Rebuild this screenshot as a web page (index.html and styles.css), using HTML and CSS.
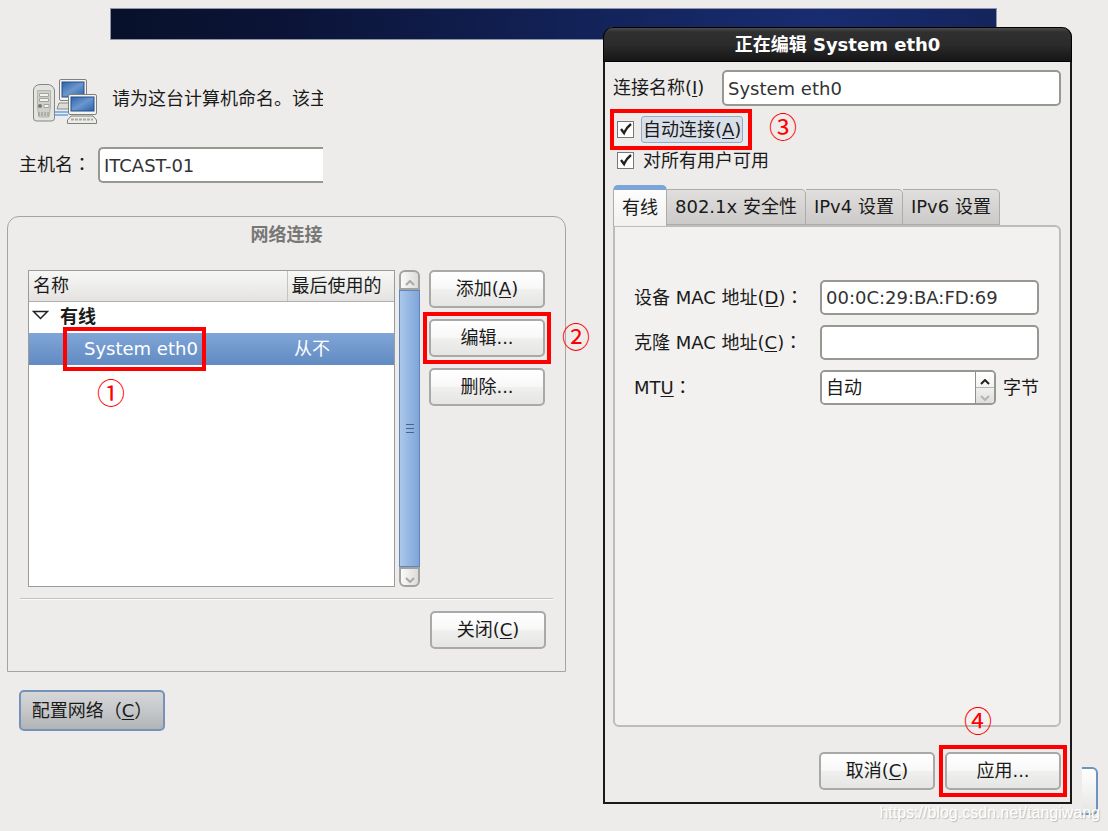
FILE: index.html
```html
<!DOCTYPE html>
<html lang="zh-CN">
<head>
    <meta charset="UTF-8">
    <meta name="viewport" content="width=device-width, initial-scale=1.0">
    <title>网络连接</title>
    <link rel="stylesheet" href="styles.css">
</head>
<body>

<div class="banner"></div>

<main class="installer">
    <div class="intro">
        <svg class="intro-icon" width="66" height="48" viewBox="0 0 66 48" aria-hidden="true">
            <defs>
                <linearGradient id="screen" x1="0" y1="0" x2="1" y2="1">
                    <stop offset="0" stop-color="#2f62a8"/>
                    <stop offset="0.5" stop-color="#6b97cd"/>
                    <stop offset="1" stop-color="#2c60a8"/>
                </linearGradient>
            </defs>
            <!-- back computer -->
            <path d="M27 25 L55 25 L57 31 L25 31 Z" fill="#dcdcd6" stroke="#8a8a86"/>
            <rect x="27.500" y="1.500" width="27" height="21" rx="1.500" fill="#f4f4f0" stroke="#80807c"/>
            <rect x="30" y="4" width="22" height="15" fill="url(#screen)" stroke="#244f8e"/>
            <!-- cable -->
            <path d="M22 34 H36 M22 37 H36" stroke="#86b4e6" stroke-width="2"/>
            <!-- server -->
            <path d="M1.500 12 Q2 7 8 6.500 H16 Q21 7 22.500 12 V40 Q22.500 43 19.500 43 H4.500 Q1.500 43 1.500 40 Z" fill="#e4e4df" stroke="#858581"/>
            <path d="M5.500 12.500 H18.500 V29 L17 39 H7 L5.500 29 Z" fill="#d0d0cb" stroke="#b4b4af"/>
            <path d="M7.500 15.500 H16.500 V18.500 H7.500 Z M7.500 20.500 H16.500 V23.500 H7.500 Z M12 26.500 H17 V29.500 H12 Z" fill="#f3f3ef" stroke="#a3a39f"/>
            <circle cx="8" cy="28" r="2" fill="#777773"/>
            <path d="M7 34 V38 M10 34 V38 M13 34 V38 M16 34 V38" stroke="#8d8d89"/>
            <!-- front computer -->
            <path d="M39 38 L61 38 L64.500 42 V45.500 H35.500 V42 Z" fill="#ecece8" stroke="#80807c"/>
            <path d="M39 41.500 H61" stroke="#a9a9a4" stroke-width="2" stroke-dasharray="3 1"/>
            <rect x="46" y="36" width="9" height="3" fill="#b9b9b4"/>
            <rect x="36.500" y="16.500" width="28" height="20" rx="1.500" fill="#f4f4f0" stroke="#80807c"/>
            <rect x="39" y="19" width="23" height="14" fill="url(#screen)" stroke="#244f8e"/>
        </svg>
        <p class="intro-text">请为这台计算机命名。该主</p>
    </div>

    <div class="host-row">
        <label for="hostname">主机名<span lang="zh-TW" class="colon">：</span></label>
        <input type="text" class="entry host-entry" id="hostname" value="ITCAST-01">
    </div>

    <section class="connections">
        <h2>网络连接</h2>
        <div class="connections-body">
            <div class="tree">
                <table>
                    <thead>
                        <tr><th class="col-name">名称</th><th class="col-used">最后使用的</th></tr>
                    </thead>
                    <tbody>
                        <tr class="group">
                            <td colspan="2">
                                <svg width="17" height="10" viewBox="0 0 17 10" aria-hidden="true"><path d="M1.500 1.500 H15.500 L8.500 8.500 Z" fill="#fff" stroke="#222" stroke-width="1.500"/></svg>有线
                            </td>
                        </tr>
                        <tr class="selected">
                            <td><span class="connection marked">System eth0</span></td>
                            <td class="last-used">从不</td>
                        </tr>
                    </tbody>
                </table>
                <span class="step step-1">①</span>
            </div>
            <div class="scrollbar">
                <button type="button" class="scroll-up" aria-label="向上"><svg width="10" height="6" viewBox="0 0 10 6"><path d="M1 5 L5 1 L9 5" fill="none" stroke="#a8a8a6" stroke-width="2"/></svg></button>
                <div class="thumb"><i></i></div>
                <button type="button" class="scroll-down" aria-label="向下"><svg width="10" height="6" viewBox="0 0 10 6"><path d="M1 1 L5 5 L9 1" fill="none" stroke="#a8a8a6" stroke-width="2"/></svg></button>
            </div>
            <div class="actions">
                <button type="button" class="btn">添加(<u>A</u>)</button>
                <button type="button" class="btn marked">编辑...<span class="step step-2">②</span></button>
                <button type="button" class="btn">删除...</button>
            </div>
        </div>
        <div class="connections-footer">
            <button type="button" class="btn">关闭(<u>C</u>)</button>
        </div>
    </section>

    <button type="button" class="btn configure">配置网络（<u>C</u>）</button>
</main>

<button type="button" class="next" aria-label="下一步"></button>

<section class="dialog">
    <h1>正在编辑 System eth0</h1>
    <form class="dialog-body">
        <div class="name-row">
            <label for="conn-name">连接名称(<u>I</u>)</label>
            <input type="text" class="entry" id="conn-name" value="System eth0">
        </div>
        <div class="check-row marked">
            <input type="checkbox" id="auto" checked>
            <label for="auto" class="focused">自动连接(<u>A</u>)</label>
            <span class="step step-3">③</span>
        </div>
        <div class="check-row">
            <input type="checkbox" id="all-users" checked>
            <label for="all-users">对所有用户可用</label>
        </div>

        <div class="tabs">
            <button type="button" class="tab active">有线</button>
            <button type="button" class="tab">802.1x 安全性</button>
            <button type="button" class="tab">IPv4 设置</button>
            <button type="button" class="tab">IPv6 设置</button>
        </div>
        <div class="panel">
            <label for="mac">设备 MAC 地址(<u>D</u>)<span lang="zh-TW" class="colon">：</span></label>
            <input type="text" class="entry" id="mac" value="00:0C:29:BA:FD:69">
            <label for="clone">克隆 MAC 地址(<u>C</u>)<span lang="zh-TW" class="colon">：</span></label>
            <input type="text" class="entry" id="clone">
            <label for="mtu">MT<u>U</u><span lang="zh-TW" class="colon">：</span></label>
            <div class="mtu">
                <div class="spin">
                    <input type="text" id="mtu" value="自动">
                    <div class="spin-buttons">
                        <button type="button" aria-label="增加"><svg width="10" height="6" viewBox="0 0 10 6"><path d="M1 5 L5 1 L9 5" fill="none" stroke="#222" stroke-width="2"/></svg></button>
                        <button type="button" aria-label="减少"><svg width="10" height="6" viewBox="0 0 10 6"><path d="M1 1 L5 5 L9 1" fill="none" stroke="#b4b4b2" stroke-width="2"/></svg></button>
                    </div>
                </div>
                <span>字节</span>
            </div>
        </div>

        <div class="dialog-actions">
            <button type="button" class="btn">取消(<u>C</u>)</button>
            <button type="submit" class="btn marked">应用...<span class="step step-4">④</span></button>
        </div>
    </form>
</section>

<div class="watermark">https://blog.csdn.net/tangiwang</div>

</body>
</html>
```
FILE: styles.css
```css
* {
    box-sizing: border-box;
}

body {
    position: relative;
    min-height: 100vh;
    margin: 0;
    overflow: hidden;
    background: #edecea;
    color: #1a1a1a;
    font-family: "DejaVu Sans", "Noto Sans CJK SC", sans-serif;
    font-size: 18px;
    line-height: 26px;
}

button,
input {
    color: inherit;
    font: inherit;
}

u {
    text-decoration-thickness: 1px;
    text-underline-offset: 2px;
}

.colon {
    font-family: "Noto Sans CJK TC", sans-serif;
    line-height: 1;
}

/* shared controls */
.btn {
    position: relative;
    width: 116px;
    height: 38px;
    padding: 0;
    border: 2px solid #a9a9a7;
    border-radius: 5px;
    background: linear-gradient(#ffffff, #f8f8f8 48%, #efefee 52%, #e5e5e3);
    white-space: nowrap;
}

.entry {
    width: 100%;
    height: 36px;
    padding: 0 4px;
    border: 2px solid #979794;
    border-radius: 5px;
    background: #fff;
    color: #333;
}

.marked {
    position: relative;
}

.marked::after {
    content: "";
    position: absolute;
    inset: -9px -8px;
    border: 4px solid #f00;
    pointer-events: none;
}

.step {
    position: absolute;
    color: #f00;
    font-family: "Noto Sans CJK SC", sans-serif;
    font-size: 28px;
    line-height: 28px;
}

.step-1 {
    top: 107px;
    left: 68px;
}

.step-2 {
    top: 1px;
    left: 131px;
}

.step-3 {
    top: -4px;
    left: 152px;
}

.step-4 {
    top: -48px;
    left: 17px;
}

/* installer page */
.banner {
    height: 32px;
    margin: 8px 111px 0 110px;
    border: 1px solid #8f95a8;
    background: linear-gradient(90deg, #08112a, #0b1437 20%, #13235a 55%, #182c70 80%, #14245c);
}

.installer {
    padding: 38px 542px 0 7px;
}

.intro {
    display: flex;
    align-items: center;
    gap: 14px;
    width: 316px;
    padding-left: 25px;
}

.intro-icon {
    flex: none;
}

.intro-text {
    margin: 0 0 6px;
    overflow: hidden;
    white-space: nowrap;
}

.host-row {
    display: flex;
    align-items: center;
    width: 316px;
    margin-top: 21px;
    padding-left: 12px;
}

.host-row label {
    flex: none;
    width: 79px;
}

.host-entry {
    border-right: 0;
    border-radius: 5px 0 0 5px;
}

.connections {
    margin-top: 33px;
    padding: 5px 12px 22px;
    border: 1px solid #a5a4a2;
    border-radius: 12px 12px 0 0;
}

.connections h2 {
    margin: 0;
    color: #777775;
    font-size: 18px;
    line-height: 26px;
    text-align: center;
}

.connections-body {
    display: flex;
    align-items: stretch;
    gap: 4px;
    padding: 22px 8px 11px;
    border-bottom: 1px solid #c4c3c1;
    box-shadow: 0 1px #fafafa;
}

.tree {
    position: relative;
    flex: 1;
    min-height: 317px;
    border: 1px solid #9c9b99;
    background: #fff;
}

.tree table {
    width: 100%;
    border-collapse: collapse;
}

.tree th {
    height: 30px;
    padding: 0 4px;
    border-bottom: 1px solid #b0afad;
    background: linear-gradient(#f7f7f6, #e4e3e1);
    font-weight: normal;
    text-align: left;
}

.tree td {
    height: 32px;
    padding: 0 3px;
}

.tree .col-used {
    width: 107px;
    border-left: 1px solid #c4c3c1;
}

.tree .group {
    font-weight: bold;
}

.tree .group svg {
    margin: 0 11px 3px 0;
}

.tree .selected {
    background: linear-gradient(#80a5d8, #618bc2);
    color: #fff;
}

.tree .last-used {
    padding-left: 7px;
}

.connection {
    display: inline-block;
    margin-left: 39px;
    padding-left: 13px;
}

.scrollbar {
    display: flex;
    flex-direction: column;
    width: 21px;
}

.scrollbar button {
    height: 20px;
    padding: 0;
    border: 2px solid #a2a2a0;
    background: linear-gradient(90deg, #fafafa, #dddcda);
    line-height: 10px;
}

.scroll-up {
    border-radius: 6px 6px 0 0;
}

.scroll-down {
    border-radius: 0 0 6px 6px;
}

.thumb {
    display: flex;
    flex: 1;
    align-items: center;
    justify-content: center;
    border: 1px solid #5f87bb;
    background: linear-gradient(90deg, #abc7eb, #7fa5d9);
}

.thumb i {
    width: 8px;
    height: 10px;
    background: repeating-linear-gradient(#45658f 0 1px, transparent 1px 4px);
}

.actions {
    display: flex;
    flex-direction: column;
    gap: 11px;
    padding-left: 5px;
}

.connections-footer {
    display: flex;
    justify-content: flex-end;
    padding: 12px 7px 0 0;
}

.configure {
    width: 146px;
    height: 41px;
    margin: 18px 0 0 12px;
    border-color: #7593b8;
    background: linear-gradient(#d6d6d7, #c5c8ca 50%, #b2b3b5);
}

.next {
    position: absolute;
    top: 767px;
    right: 10px;
    width: 16px;
    height: 48px;
    border: 2px solid #6f92bf;
    border-left: 0;
    border-radius: 0 6px 6px 0;
    background: linear-gradient(#fff, #e5e5e3);
}

/* connection editor */
.dialog {
    position: absolute;
    top: 27px;
    right: 36px;
    left: 603px;
    border: 2px solid #1a1a1a;
    border-top: 0;
    border-radius: 10px 10px 0 0;
    background: #edecea;
}

.dialog h1 {
    height: 35px;
    margin: 0 -2px;
    border: 1px solid #000;
    border-radius: 10px 10px 0 0;
    background: linear-gradient(#4c4c4c, #303030 12%, #2b2b2b 50%, #161616);
    color: #fff;
    font-size: 18px;
    line-height: 34px;
    text-align: center;
}

.dialog-body {
    padding: 8px 9px 12px 8px;
}

.name-row {
    display: flex;
    align-items: center;
    margin-bottom: 10px;
}

.name-row label {
    flex: none;
    width: 109px;
}

.check-row {
    display: flex;
    align-items: center;
    gap: 7px;
    width: 128px;
    height: 27px;
    margin: 0 0 4px 4px;
}

.check-row.marked::after {
    inset: -7px;
}

.check-row label {
    flex: none;
    padding: 0 2px;
}

.check-row .focused {
    padding: 0 1px;
    border: 1px solid #93a9c6;
    border-radius: 3px;
    background: #d8dfe8;
    line-height: 25px;
}

.check-row input {
    flex: none;
    width: 17px;
    height: 17px;
    margin: 0;
    appearance: none;
    border: 1px solid #777775;
    background: #fff;
}

.check-row input:checked {
    background: #fff url("data:image/svg+xml,%3Csvg xmlns='http://www.w3.org/2000/svg' viewBox='0 0 15 15'%3E%3Cpath d='M3 7 L6 11 Q8 6 13 2' fill='none' stroke='%23222' stroke-width='2.4'/%3E%3C/svg%3E");
}

.tabs {
    display: flex;
    align-items: flex-end;
    height: 41px;
    margin-top: 11px;
}

.tab {
    height: 36px;
    margin-bottom: 1px;
    padding: 0 8px;
    border: 1px solid #adacaa;
    border-left: 0;
    border-radius: 0 5px 0 0;
    background: linear-gradient(#e0dfdd, #cbcac8);
    white-space: nowrap;
}

.tab.active {
    position: relative;
    height: 41px;
    margin-bottom: 0;
    padding: 0 8px;
    border-left: 1px solid #adacaa;
    border-top: 5px solid #7da3d8;
    border-bottom: 0;
    border-radius: 5px 5px 0 0;
    background: linear-gradient(#fdfdfd, #f2f1ef);
}

.panel {
    display: grid;
    grid-template-columns: 186px 1fr;
    gap: 10px 0;
    align-content: start;
    align-items: center;
    min-height: 502px;
    margin-top: -1px;
    padding: 53px 20px 20px 19px;
    border: 2px solid #bdbcba;
    border-radius: 0 6px 6px 6px;
    background: #f2f1ef;
}

.panel .entry {
    height: 35px;
}

.mtu {
    display: flex;
    align-items: center;
    justify-content: space-between;
}

.spin {
    display: flex;
    width: 176px;
    height: 35px;
    border: 2px solid #979794;
    border-radius: 5px;
    background: #fff;
    overflow: hidden;
}

.spin input {
    flex: 1;
    min-width: 0;
    padding: 0 4px;
    border: 0;
    background: #fff;
}

.spin-buttons {
    display: flex;
    flex-direction: column;
    width: 19px;
    border-left: 1px solid #8f8f8c;
}

.spin-buttons button {
    flex: 1;
    padding: 0;
    border: 0;
    background: linear-gradient(#fff, #f3f3f2);
    line-height: 8px;
}

.spin-buttons button + button {
    border-top: 1px solid #b4b4b2;
    background: linear-gradient(#f0f0ef, #dededc);
}

.dialog-actions {
    display: flex;
    justify-content: flex-end;
    gap: 10px;
    padding: 25px 0 0;
}

.watermark {
    position: absolute;
    right: 8px;
    bottom: 5px;
    color: #fff;
    font-family: "Liberation Sans", sans-serif;
    font-size: 16px;
    text-shadow: 1px 1px 1px #bbb;
}
```
